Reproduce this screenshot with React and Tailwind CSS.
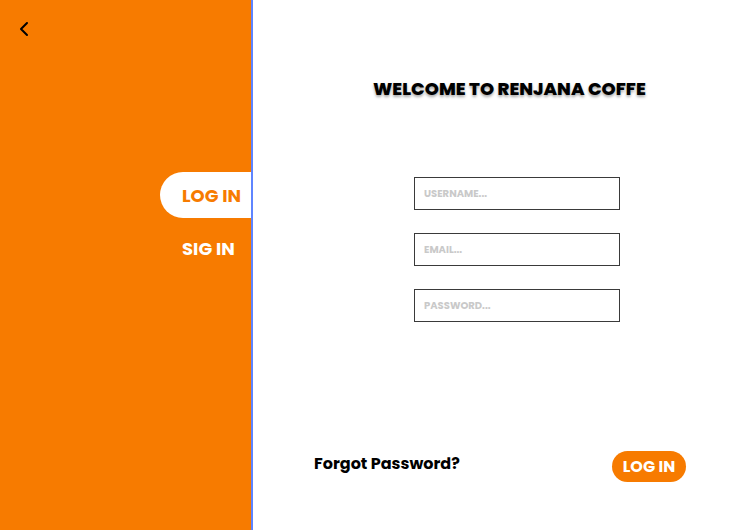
import { ChevronLeft } from "lucide-react";

const font = { fontFamily: "Poppins, Inter, 'Noto Sans', sans-serif" };

const Field = ({ placeholder }) => (
  <input
    type="text"
    placeholder={placeholder}
    className="w-[206px] h-[33px] border border-[#3a3a3a] bg-white px-[9px] text-[10px] font-bold text-black placeholder:text-[#c9c9c9] outline-none"
  />
);

export default function App() {
  return (
    <div className="flex h-[530px] w-[747px] bg-white" style={font}>
      <div className="flex w-[251px] flex-col bg-[#f77b00]">
        <div className="pl-[12px] pt-[17px] text-black">
          <ChevronLeft size={24} strokeWidth={2} />
        </div>
        <div className="mt-[131px] ml-[160px] flex h-[46px] items-center rounded-l-full bg-white pl-[22px]">
          <span className="text-[18px] font-bold text-[#f77b00]">LOG IN</span>
        </div>
        <div className="ml-[182px] mt-[17px] text-[18px] font-bold text-white">SIG IN</div>
      </div>
      <div className="w-[2px] bg-[#5f85ff]" />
      <div className="flex flex-1 flex-col">
        <h1
          className="mt-[75px] pl-[120px] text-[18px] font-extrabold text-black"
          style={{ textShadow: "0 2px 3px rgba(0,0,0,0.35)" }}
        >
          WELCOME TO RENJANA COFFE
        </h1>
        <div className="mt-[75px] ml-[161px] flex flex-col gap-[23px]">
          <Field placeholder="USERNAME..." />
          <Field placeholder="EMAIL..." />
          <Field placeholder="PASSWORD..." />
        </div>
        <div className="mt-[129px] flex items-center justify-between px-[61px]">
          <span className="-mt-[5px] text-[16px] font-bold text-black">Forgot Password?</span>
          <button className="h-[31px] w-[74px] rounded-full bg-[#f77b00] text-[16px] font-bold text-white">
            LOG IN
          </button>
        </div>
      </div>
    </div>
  );
}
